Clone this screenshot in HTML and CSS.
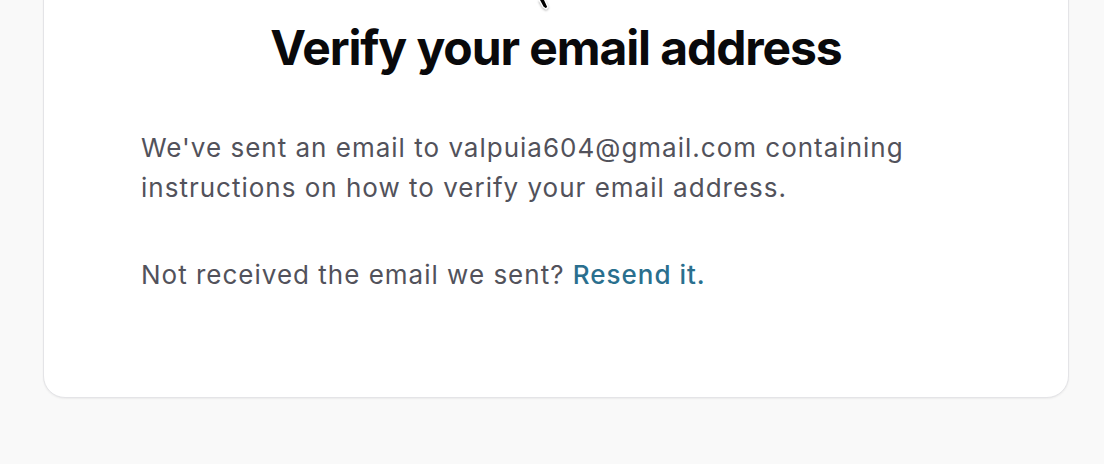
FILE: index.html
```html
<!DOCTYPE html>
<html lang="en">
<head>
<meta charset="utf-8">
<title>Verify your email address</title>
<link rel="stylesheet" href="styles.css">
</head>
<body>
<main class="page">
  <section class="card">
    <h1 class="title">Verify your email address</h1>
    <div class="content">
      <p class="text">We've sent an email to valpuia604@gmail.com containing instructions on how to verify your email address.</p>
      <p class="text">Not received the email we sent? <a class="link" href="#">Resend it.</a></p>
    </div>
  </section>
</main>
<svg class="cursor" width="20" height="14" viewBox="0 0 20 14" aria-hidden="true">
  <path d="M4 -4 L10 7 L13 9 L15 7 L10 -4 Z" fill="#000" stroke="#fff" stroke-width="1.5" stroke-linejoin="round"/>
</svg>
</body>
</html>
```
FILE: styles.css
```css
html, body {
  margin: 0;
  padding: 0;
  background: #f9f9f9;
}
body {
  position: relative;
  font-family: Inter, "Noto Sans", sans-serif;
  width: 1104px;
  height: 464px;
  overflow: hidden;
}
.page {
  padding: 0 35px 0 43px;
}
.card {
  margin-top: -60px;
  background: #fff;
  border: 1px solid #e4e4e7;
  border-radius: 22px;
  box-shadow: 0 1px 2px rgba(0,0,0,0.06);
  padding: 79px 40px 102px;
  display: flex;
  flex-direction: column;
  align-items: center;
}
.title {
  margin: 0;
  font-size: 48px;
  font-weight: 700;
  line-height: 56px;
  color: #09090b;
  letter-spacing: -1.1px;
}
.content {
  width: 830px;
  margin-top: 52px;
  display: flex;
  flex-direction: column;
  gap: 47px;
}
.text {
  margin: 0;
  font-size: 26px;
  line-height: 40px;
  color: #52525b;
  letter-spacing: 1px;
}
.link {
  color: #2a6f8e;
  font-weight: 500;
  text-decoration: none;
}
.cursor {
  position: absolute;
  left: 533px;
  top: 0;
  filter: drop-shadow(0 1px 1px rgba(0,0,0,0.3));
}
```
